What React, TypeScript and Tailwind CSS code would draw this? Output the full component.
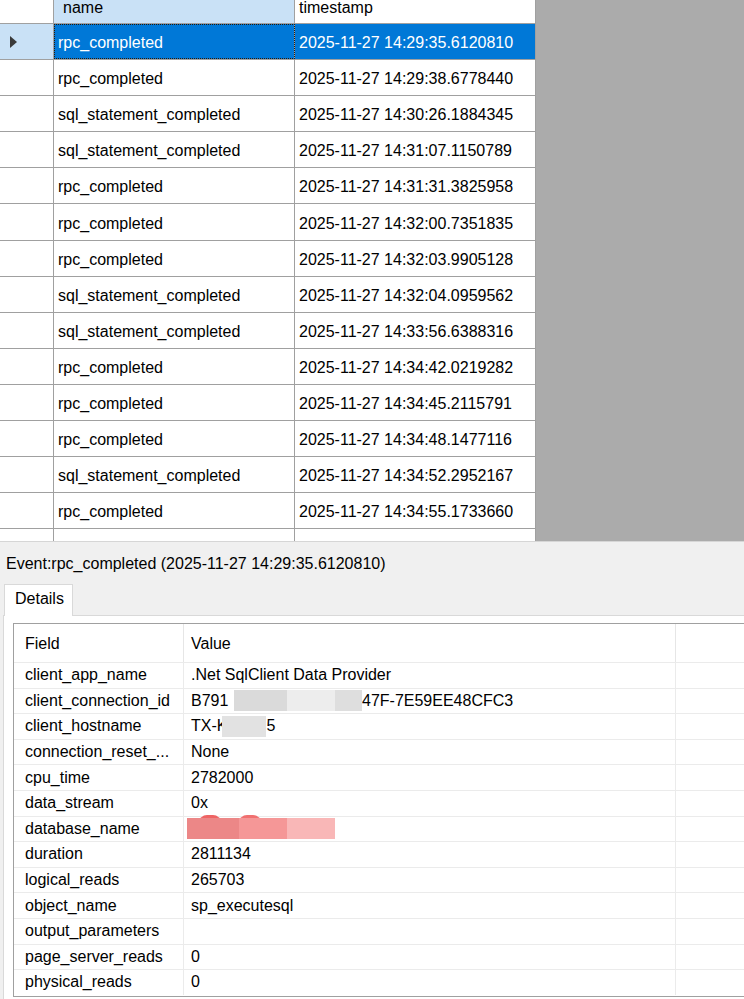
import React from "react";

/**
 * Extended Events viewer — event grid on top, details pane below.
 */

const events: { name: string; timestamp: string }[] = [
  { name: "rpc_completed", timestamp: "2025-11-27 14:29:35.6120810" },
  { name: "rpc_completed", timestamp: "2025-11-27 14:29:38.6778440" },
  { name: "sql_statement_completed", timestamp: "2025-11-27 14:30:26.1884345" },
  { name: "sql_statement_completed", timestamp: "2025-11-27 14:31:07.1150789" },
  { name: "rpc_completed", timestamp: "2025-11-27 14:31:31.3825958" },
  { name: "rpc_completed", timestamp: "2025-11-27 14:32:00.7351835" },
  { name: "rpc_completed", timestamp: "2025-11-27 14:32:03.9905128" },
  { name: "sql_statement_completed", timestamp: "2025-11-27 14:32:04.0959562" },
  { name: "sql_statement_completed", timestamp: "2025-11-27 14:33:56.6388316" },
  { name: "rpc_completed", timestamp: "2025-11-27 14:34:42.0219282" },
  { name: "rpc_completed", timestamp: "2025-11-27 14:34:45.2115791" },
  { name: "rpc_completed", timestamp: "2025-11-27 14:34:48.1477116" },
  { name: "sql_statement_completed", timestamp: "2025-11-27 14:34:52.2952167" },
  { name: "rpc_completed", timestamp: "2025-11-27 14:34:55.1733660" },
];

// Redacted value pieces (gray / pink blur blocks)
function Blur({ w, color, extra = "" }: { w: string; color: string; extra?: string }) {
  return <span className={`relative inline-block h-[21px] shrink-0 ${w} ${color} ${extra}`} />;
}

const fields: { field: string; value: React.ReactNode }[] = [
  { field: "client_app_name", value: ".Net SqlClient Data Provider" },
  {
    field: "client_connection_id",
    value: (
      <span className="flex items-center whitespace-nowrap">
        <span className="w-[43px] shrink-0">B791</span>
        <Blur w="w-[53px]" color="bg-[#dadada]" />
        <Blur w="w-[48px]" color="bg-[#ededed]" />
        <Blur w="w-[27px]" color="bg-[#dedede]" />
        <span>47F-7E59EE48CFC3</span>
      </span>
    ),
  },
  {
    field: "client_hostname",
    value: (
      <span className="flex items-center whitespace-nowrap">
        <span className="shrink-0">TX-K</span>
        <Blur w="w-[44px]" color="bg-[#e2e2e2]" extra="-ml-[5px]" />
        <span>5</span>
      </span>
    ),
  },
  { field: "connection_reset_...", value: "None" },
  { field: "cpu_time", value: "2782000" },
  { field: "data_stream", value: "0x" },
  {
    field: "database_name",
    value: (
      <span className="relative -ml-[4px] flex items-center">
        <span className="absolute left-[12px] top-[-3px] h-[8px] w-[22px] rounded-t-full bg-[#ee6464]" />
        <span className="absolute left-[52px] top-[-3px] h-[8px] w-[22px] rounded-t-full bg-[#f07070]" />
        <Blur w="w-[52px]" color="bg-[#ec8787]" />
        <Blur w="w-[48px]" color="bg-[#f59797]" />
        <Blur w="w-[48px]" color="bg-[#f9b7b7]" />
      </span>
    ),
  },
  { field: "duration", value: "2811134" },
  { field: "logical_reads", value: "265703" },
  { field: "object_name", value: "sp_executesql" },
  { field: "output_parameters", value: "" },
  { field: "page_server_reads", value: "0" },
  { field: "physical_reads", value: "0" },
];

function EventGrid() {
  return (
    <div className="flex h-[541px] bg-[#ababab]">
      <div className="flex w-[536px] flex-col overflow-hidden bg-white">
        {/* Column headers (scrolled, top clipped) */}
        <div className="flex h-[24px] shrink-0 border-b border-[#a0a0a0]">
          <div className="w-[54px] border-r border-[#a0a0a0] bg-white" />
          <div className="w-[241px] border-r border-[#a0a0a0] bg-[#c9e1f6] pl-[9px] leading-[16px]">
            name
          </div>
          <div className="w-[241px] border-r border-[#a0a0a0] bg-white pl-[4px] leading-[16px]">
            timestamp
          </div>
        </div>

        {events.map((ev, i) => {
          const selected = i === 0;
          return (
            <div key={i} className="flex h-[36.1px] shrink-0 border-b border-[#a0a0a0]">
              <div
                className={`flex w-[54px] items-center border-r border-[#a0a0a0] pl-[10px] ${
                  selected ? "bg-[#c9e1f6]" : "bg-white"
                }`}
              >
                {selected && (
                  <svg width="8" height="12" viewBox="0 0 8 12">
                    <path d="M0 0 L7 6 L0 12 Z" fill="#3a3a3a" />
                  </svg>
                )}
              </div>
              <div
                className={`flex w-[241px] items-center border-r border-[#a0a0a0] pl-[4px] pt-[3px] ${
                  selected
                    ? "bg-[#0078d7] text-white outline-1 outline-dotted -outline-offset-1 outline-[#2b1a0a]"
                    : ""
                }`}
              >
                {ev.name}
              </div>
              <div
                className={`flex w-[241px] items-center border-r border-[#a0a0a0] pl-[4px] pt-[3px] ${
                  selected ? "bg-[#0078d7] text-white" : ""
                }`}
              >
                {ev.timestamp}
              </div>
            </div>
          );
        })}

        {/* Partially visible next row */}
        <div className="flex flex-1">
          <div className="w-[54px] border-r border-[#a0a0a0]" />
          <div className="w-[241px] border-r border-[#a0a0a0]" />
          <div className="w-[241px] border-r border-[#a0a0a0]" />
        </div>
      </div>
      <div className="flex-1" />
    </div>
  );
}

function DetailsPane() {
  return (
    <div className="flex flex-1 flex-col border-t border-[#d6d6d6] bg-[#f0f0f0]">
      <div className="flex h-[42px] shrink-0 items-center pl-[6px] pt-[1px]">
        Event:rpc_completed (2025-11-27 14:29:35.6120810)
      </div>

      {/* Tab strip */}
      <div className="flex h-[31px] shrink-0 pl-[4px]">
        <div className="relative z-10 -mb-px flex w-[69px] items-center border border-b-0 border-[#d9d9d9] bg-white pb-[3px] pl-[10px]">
          Details
        </div>
      </div>

      {/* Tab page */}
      <div className="ml-[3px] flex-1 border-l border-t border-[#d9d9d9] bg-white pl-[9px] pt-[7px]">
        <div className="flex h-[374px] flex-col border-b border-l border-t border-[#a0a0a0]">
          <div className="flex h-[38px] shrink-0">
            <div className="flex w-[170px] items-center border-r border-[#e6e6e6] pl-[11px] pt-[1px]">
              Field
            </div>
            <div className="flex w-[492px] items-center border-r border-[#e6e6e6] pl-[7px] pt-[1px]">
              Value
            </div>
            <div className="flex-1" />
          </div>
          {fields.map((f) => (
            <div key={f.field} className="flex h-[25.6px] shrink-0 border-t border-[#ebebeb]">
              <div className="flex w-[170px] items-center whitespace-nowrap border-r border-[#ebebeb] pl-[11px]">
                {f.field}
              </div>
              <div className="flex w-[492px] items-center whitespace-nowrap border-r border-[#ebebeb] pl-[7px]">
                {f.value}
              </div>
              <div className="flex-1" />
            </div>
          ))}
        </div>
      </div>
    </div>
  );
}

export default function App() {
  return (
    <div className="flex h-[999px] w-[744px] flex-col overflow-hidden bg-[#f0f0f0] font-['Liberation_Sans',Arial,sans-serif] text-[16px] text-black">
      <EventGrid />
      <DetailsPane />
    </div>
  );
}
